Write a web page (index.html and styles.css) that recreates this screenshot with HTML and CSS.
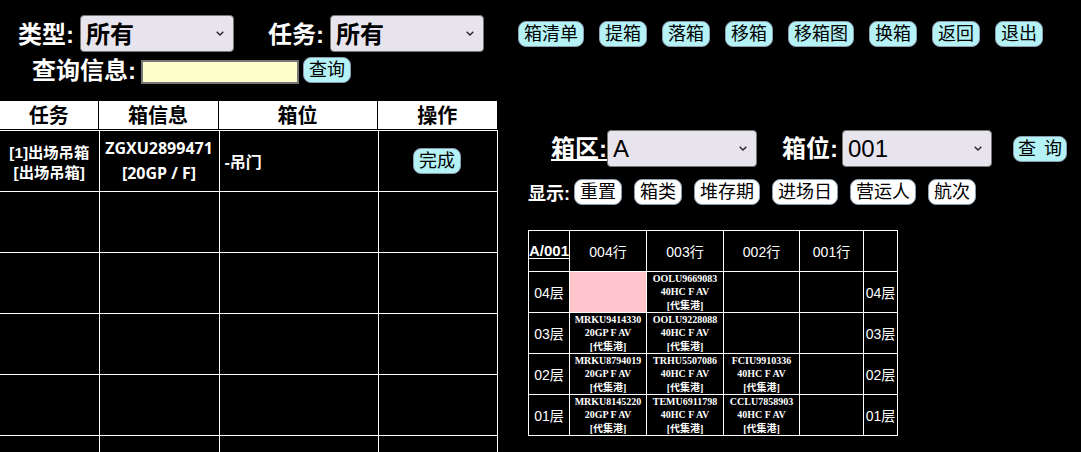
FILE: index.html
```html
<!DOCTYPE html>
<html lang="zh">
<head>
<meta charset="utf-8">
<title>任务</title>
<link rel="stylesheet" href="styles.css">
</head>
<body>
<div class="page">
  <section class="left">
    <div class="filters">
      <div class="filter-row first">
        <label class="lbl">类型:</label>
        <select class="sel sel-top"><option>所有</option></select>
        <label class="lbl lbl-task">任务:</label>
        <select class="sel sel-top"><option>所有</option></select>
      </div>
      <div class="filter-row second">
        <label class="lbl">查询信息:</label>
        <input class="search" type="text">
        <button class="btn">查询</button>
      </div>
    </div>
    <table class="head">
      <tr><th class="c1">任务</th><th class="c2">箱信息</th><th class="c3">箱位</th><th class="c4">操作</th></tr>
    </table>
    <table class="tasks">
      <tr>
        <td class="c1 task">[1]出场吊箱<br>[出场吊箱]</td>
        <td class="c2 box">ZGXU2899471<br>[20GP / F]</td>
        <td class="c3 pos">-吊门</td>
        <td class="c4 op"><button class="btn">完成</button></td>
      </tr>
      <tr><td></td><td></td><td></td><td></td></tr>
      <tr><td></td><td></td><td></td><td></td></tr>
      <tr><td></td><td></td><td></td><td></td></tr>
      <tr><td></td><td></td><td></td><td></td></tr>
      <tr><td></td><td></td><td></td><td></td></tr>
    </table>
  </section>
  <section class="right">
    <nav class="actions">
      <button class="btn">箱清单</button>
      <button class="btn">提箱</button>
      <button class="btn">落箱</button>
      <button class="btn">移箱</button>
      <button class="btn">移箱图</button>
      <button class="btn">换箱</button>
      <button class="btn">返回</button>
      <button class="btn">退出</button>
    </nav>
    <div class="yard">
      <label class="lbl"><u>箱区:</u></label>
      <select class="sel sel-yard"><option>A</option></select>
      <label class="lbl lbl-pos">箱位:</label>
      <select class="sel sel-yard"><option>001</option></select>
      <button class="btn btn-q">查 询</button>
    </div>
    <div class="display">
      <span class="lbl-small">显示:</span>
      <button class="btn white">重置</button>
      <button class="btn white">箱类</button>
      <button class="btn white">堆存期</button>
      <button class="btn white">进场日</button>
      <button class="btn white">营运人</button>
      <button class="btn white">航次</button>
    </div>
    <table class="bay">
      <tr class="hdr">
        <td class="k0"><u class="bayname">A/001</u></td>
        <td class="k1">004行</td><td class="k2">003行</td><td class="k3">002行</td><td class="k4">001行</td><td class="k5"></td>
      </tr>
      <tr>
        <td>04层</td><td class="pink"></td>
        <td class="ct">OOLU9669083<br>40HC F AV<br>[代集港]</td><td></td><td></td><td>04层</td>
      </tr>
      <tr>
        <td>03层</td><td class="ct">MRKU9414330<br>20GP F AV<br>[代集港]</td>
        <td class="ct">OOLU9228088<br>40HC F AV<br>[代集港]</td><td></td><td></td><td>03层</td>
      </tr>
      <tr>
        <td>02层</td><td class="ct">MRKU8794019<br>20GP F AV<br>[代集港]</td>
        <td class="ct">TRHU5507086<br>40HC F AV<br>[代集港]</td>
        <td class="ct">FCIU9910336<br>40HC F AV<br>[代集港]</td><td></td><td>02层</td>
      </tr>
      <tr>
        <td>01层</td><td class="ct">MRKU8145220<br>20GP F AV<br>[代集港]</td>
        <td class="ct">TEMU6911798<br>40HC F AV<br>[代集港]</td>
        <td class="ct">CCLU7858903<br>40HC F AV<br>[代集港]</td><td></td><td>01层</td>
      </tr>
    </table>
  </section>
</div>
</body>
</html>
```
FILE: styles.css
```css
* { box-sizing: border-box; }
html, body { margin: 0; height: 452px; overflow: hidden; background: #000; }
body { color: #fff; font-family: "Liberation Sans", "Noto Sans CJK SC", sans-serif; }
.page { display: grid; grid-template-columns: 518px 1fr; height: 452px; overflow: hidden; }
.left { width: 498px; }
.filters { height: 101px; padding-top: 15px; }
.filter-row { display: flex; }
.first { height: 37px; padding-left: 18px; align-items: center; }
.second { height: 28px; margin-top: 5px; padding-left: 32px; align-items: flex-start; }
.lbl { font-size: 24px; font-weight: 700; color: #fff; white-space: nowrap; line-height: 28px; }
.first .lbl { margin-right: 6px; padding-top: 2px; }
.first .lbl-task { margin-left: 34px; margin-right: 6px; }
.second .lbl { margin-right: 5px; }
.sel {
  appearance: none; color: #000; border: 1px solid #767676; border-radius: 4px;
  background: #e8e4ee url("data:image/svg+xml,%3Csvg xmlns='http://www.w3.org/2000/svg' width='8' height='5'%3E%3Cpath d='M.7.7 4 4 7.3.7' fill='none' stroke='%23222' stroke-width='1.3'/%3E%3C/svg%3E") no-repeat right 9px center;
  font-family: "Liberation Sans", "Noto Sans CJK SC", sans-serif;
  font-size: 24px; height: 37px; padding: 0 0 0 5px;
}
.sel-top { width: 154px; font-weight: 700; padding-top: 2px; }
.sel-yard { width: 150px; }
.search { width: 158px; height: 24px; margin-top: 3px; background: #ffffcc; border: 2px solid #767676; padding: 0; }
.btn {
  background: #b4f2f6; color: #000; border: 1px solid #8c9cb0; border-radius: 8px;
  font-family: "Liberation Sans", "Noto Sans CJK SC", sans-serif; font-size: 18px;
  height: 26px; padding: 0 5px; line-height: 22px; white-space: nowrap;
}
.second .btn { margin-left: 4px; }
.btn.white { background: #fff; }
table { border-collapse: collapse; table-layout: fixed; }
.head { width: 497px; background: #fff; color: #000; height: 29px; }
.head th { font-size: 20px; font-weight: 700; padding: 2px 0 0; height: 28px; line-height: 26px; border-left: 1px solid #000; border-right: 1px solid #000; border-bottom: 1px solid #000; }
.head th:first-child { border-left: 0; }
.head th:last-child { border-right: 0; }
.head .c1 { width: 98px; }
.head .c2 { width: 120px; }
.head .c3 { width: 159px; }
.head .c4 { width: 120px; }
.tasks { width: 497px; }
.tasks td { border: 1px solid #fff; height: 61px; padding: 0; font-size: 16px; font-weight: 700; text-align: center; }
.tasks td:first-child { border-left: 0; }
.tasks .c1 { width: 99px; }
.tasks .c2 { width: 120px; }
.tasks .c3 { width: 159px; }
.tasks .c4 { width: 119px; }
.tasks .task { line-height: 20px; font-size: 15.3px; padding-top: 3px; }
.tasks .box { line-height: 25px; font-family: "Open Sans", "Noto Sans CJK SC", sans-serif; }
.tasks .pos { text-align: left; padding-left: 5px; }
.tasks .op { padding-right: 1px; }
.right { min-width: 0; }
.actions { display: flex; gap: 15px; padding-top: 21px; height: 130px; align-items: flex-start; }
.yard { display: flex; align-items: center; height: 37px; padding-left: 33px; }
.yard u { text-underline-offset: 2px; }
.lbl-pos { margin-left: 25px; margin-right: 4px; }
.btn-q { margin-left: 21px; word-spacing: 3px; padding: 0 4px; }
.display { display: flex; align-items: center; height: 26px; margin-top: 12px; padding-left: 10px; gap: 12px; }
.lbl-small { font-size: 18px; font-weight: 700; margin-right: -8px; }
.bay { margin: 25px 0 0 10px; width: 369px; color: #fff; }
.bay td { border: 1px solid #fff; padding: 0; height: 41px; text-align: center; font-size: 14px; }
.bay .k0 { width: 41px; }
.bay .k1 { width: 77px; }
.bay .k2 { width: 77px; }
.bay .k3 { width: 76px; }
.bay .k4 { width: 64px; }
.bay .k5 { width: 34px; }
.bayname { display: block; font-weight: 700; font-size: 15px; line-height: 15px; text-decoration: none; border-bottom: 1px solid #fff; }
.bay .pink { background: #ffc4cc; }
.bay .ct { font-family: "Liberation Serif", "Noto Sans CJK SC", serif; font-size: 10px; font-weight: 700; line-height: 13.3px; white-space: nowrap; }
```
